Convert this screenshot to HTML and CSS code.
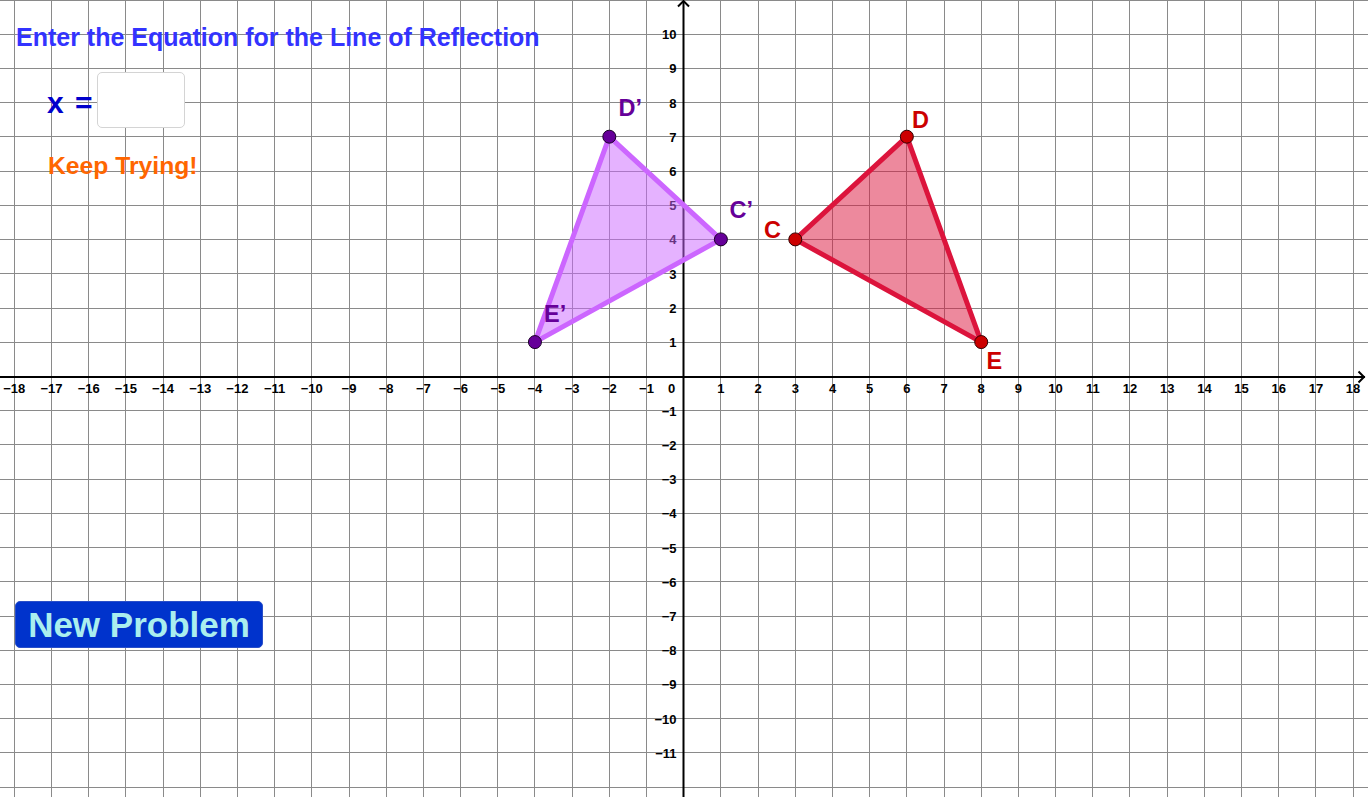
FILE: index.html
```html
<!DOCTYPE html>
<html lang="en">
<head>
<meta charset="utf-8">
<title>Line of Reflection</title>
<link rel="stylesheet" href="styles.css">
</head>
<body>
<div class="applet">
  <svg class="canvas" width="1368" height="797" viewBox="0 0 1368 797" xmlns="http://www.w3.org/2000/svg">
    <path class="grid" d="M14.5 0V797M51.5 0V797M88.5 0V797M125.5 0V797M163.5 0V797M200.5 0V797M237.5 0V797M274.5 0V797M311.5 0V797M349.5 0V797M386.5 0V797M423.5 0V797M460.5 0V797M497.5 0V797M534.5 0V797M572.5 0V797M609.5 0V797M646.5 0V797M720.5 0V797M758.5 0V797M795.5 0V797M832.5 0V797M869.5 0V797M906.5 0V797M944.5 0V797M981.5 0V797M1018.5 0V797M1055.5 0V797M1092.5 0V797M1129.5 0V797M1167.5 0V797M1204.5 0V797M1241.5 0V797M1278.5 0V797M1315.5 0V797M1353.5 0V797M0 0.5H1368M0 34.5H1368M0 68.5H1368M0 102.5H1368M0 136.5H1368M0 171.5H1368M0 205.5H1368M0 239.5H1368M0 273.5H1368M0 308.5H1368M0 342.5H1368M0 410.5H1368M0 444.5H1368M0 479.5H1368M0 513.5H1368M0 547.5H1368M0 581.5H1368M0 616.5H1368M0 650.5H1368M0 684.5H1368M0 718.5H1368M0 752.5H1368M0 787.5H1368"/>
    <path class="axis" d="M0 377H1365M683.5 797V1"/>
    <path class="axis" d="M1358.5 371.5L1364 377L1358.5 382.5M678 6.5L683.5 1L689 6.5"/>
    <g class="xlab">
      <text x="14.3" y="393.3">−18</text><text x="51.5" y="393.3">−17</text><text x="88.7" y="393.3">−16</text><text x="125.9" y="393.3">−15</text><text x="163" y="393.3">−14</text><text x="200.2" y="393.3">−13</text><text x="237.4" y="393.3">−12</text><text x="274.6" y="393.3">−11</text><text x="311.8" y="393.3">−10</text><text x="349" y="393.3">−9</text><text x="386.2" y="393.3">−8</text><text x="423.4" y="393.3">−7</text><text x="460.6" y="393.3">−6</text><text x="497.8" y="393.3">−5</text><text x="534.9" y="393.3">−4</text><text x="572.1" y="393.3">−3</text><text x="609.3" y="393.3">−2</text><text x="646.5" y="393.3">−1</text><text x="671.5" y="393.3">0</text><text x="720.9" y="393.3">1</text><text x="758.1" y="393.3">2</text><text x="795.3" y="393.3">3</text><text x="832.5" y="393.3">4</text><text x="869.7" y="393.3">5</text><text x="906.8" y="393.3">6</text><text x="944" y="393.3">7</text><text x="981.2" y="393.3">8</text><text x="1018.4" y="393.3">9</text><text x="1055.6" y="393.3">10</text><text x="1092.8" y="393.3">11</text><text x="1130" y="393.3">12</text><text x="1167.2" y="393.3">13</text><text x="1204.4" y="393.3">14</text><text x="1241.6" y="393.3">15</text><text x="1278.7" y="393.3">16</text><text x="1315.9" y="393.3">17</text><text x="1353.1" y="393.3">18</text>
    </g>
    <g class="ylab">
      <text x="676.5" y="39">10</text><text x="676.5" y="73.2">9</text><text x="676.5" y="107.5">8</text><text x="676.5" y="141.7">7</text><text x="676.5" y="175.9">6</text><text x="676.5" y="210.2">5</text><text x="676.5" y="244.4">4</text><text x="676.5" y="278.6">3</text><text x="676.5" y="312.8">2</text><text x="676.5" y="347.1">1</text><text x="676.5" y="415.5">−1</text><text x="676.5" y="449.8">−2</text><text x="676.5" y="484">−3</text><text x="676.5" y="518.2">−4</text><text x="676.5" y="552.5">−5</text><text x="676.5" y="586.7">−6</text><text x="676.5" y="620.9">−7</text><text x="676.5" y="655.1">−8</text><text x="676.5" y="689.4">−9</text><text x="676.5" y="723.6">−10</text><text x="676.5" y="757.8">−11</text>
    </g>
    <polygon class="tri-image" points="609.32,136.69 720.89,239.38 534.94,342.07"/>
    <polygon class="tri-pre" points="795.27,239.38 906.84,136.69 981.22,342.07"/>
    <circle class="pt-image" cx="609.32" cy="136.69" r="6.5"/>
    <circle class="pt-image" cx="720.89" cy="239.38" r="6.5"/>
    <circle class="pt-image" cx="534.94" cy="342.07" r="6.5"/>
    <circle class="pt-pre" cx="795.27" cy="239.38" r="6.5"/>
    <circle class="pt-pre" cx="906.84" cy="136.69" r="6.5"/>
    <circle class="pt-pre" cx="981.22" cy="342.07" r="6.5"/>
    <text class="lab-image" x="618.5" y="116">D’</text>
    <text class="lab-image" x="729.5" y="218.3">C’</text>
    <text class="lab-image" x="544" y="321.7">E’</text>
    <text class="lab-pre" x="764" y="237.5">C</text>
    <text class="lab-pre" x="912" y="128.3">D</text>
    <text class="lab-pre" x="986.5" y="368.5">E</text>
  </svg>

  <div class="panel">
    <h1 class="prompt">Enter the Equation for the Line of Reflection</h1>
    <div class="eq-row">
      <span class="eq-label">x =</span>
      <input class="eq-input" type="text" aria-label="x value">
    </div>
    <p class="status">Keep Trying!</p>
  </div>

  <button class="new-btn" type="button">New Problem</button>
</div>
</body>
</html>
```

FILE: styles.css
```css
html, body {
  margin: 0;
  padding: 0;
  background: #ffffff;
  overflow: hidden;
}

.applet {
  position: relative;
  width: 1368px;
  height: 797px;
  font-family: "Liberation Sans", Arial, sans-serif;
}

.canvas {
  display: block;
}

.grid {
  fill: none;
  stroke: #8a8a8a;
  stroke-width: 1;
}

.axis {
  fill: none;
  stroke: #000000;
  stroke-width: 2;
}

.xlab text,
.ylab text {
  font-family: "Liberation Sans", Arial, sans-serif;
  font-weight: bold;
  font-size: 13px;
  fill: #000000;
}

.xlab text {
  text-anchor: middle;
}

.ylab text {
  text-anchor: end;
}

.tri-image {
  fill: rgba(204, 102, 255, 0.5);
  stroke: #cc66ff;
  stroke-width: 5;
  stroke-linejoin: round;
}

.tri-pre {
  fill: rgba(220, 20, 60, 0.5);
  stroke: #dc143c;
  stroke-width: 5;
  stroke-linejoin: round;
}

.pt-image {
  fill: #660099;
  stroke: #1a0026;
  stroke-width: 1;
}

.pt-pre {
  fill: #cc0000;
  stroke: #330000;
  stroke-width: 1;
}

.lab-image,
.lab-pre {
  font-family: "Liberation Sans", Arial, sans-serif;
  font-weight: bold;
  font-size: 23.5px;
}

.lab-image {
  fill: #660099;
}

.lab-pre {
  fill: #cc0000;
}

.panel {
  position: absolute;
  left: 0;
  top: 0;
  padding: 23px 0 0 16px;
  display: flex;
  flex-direction: column;
  align-items: flex-start;
}

.prompt {
  margin: 0;
  font-size: 25px;
  line-height: 28px;
  font-weight: bold;
  color: #3333ff;
  white-space: nowrap;
}

.eq-row {
  margin: 21px 0 0 31px;
  display: flex;
  align-items: center;
  gap: 4px;
}

.eq-label {
  font-size: 30px;
  font-weight: bold;
  line-height: 34px;
  word-spacing: 3px;
  color: #0000cc;
  padding-top: 6px;
}

.eq-input {
  box-sizing: border-box;
  width: 88px;
  height: 56px;
  margin: 0;
  padding: 0 6px;
  border: 1px solid #d4d4d4;
  border-radius: 5px;
  background: #ffffff;
  font-family: "Liberation Sans", Arial, sans-serif;
  font-size: 22px;
  outline: none;
}

.status {
  margin: 24px 0 0 32px;
  font-size: 24.7px;
  line-height: 28px;
  font-weight: bold;
  color: #ff6600;
}

.new-btn {
  position: absolute;
  left: 15px;
  top: 601px;
  box-sizing: border-box;
  width: 248px;
  height: 47px;
  margin: 0;
  padding: 0;
  border: 1px solid #2a4fc8;
  border-radius: 5px;
  background: #0033cc;
  color: #aaeeee;
  font-family: "Liberation Sans", Arial, sans-serif;
  font-size: 35px;
  font-weight: bold;
  line-height: 45px;
  text-align: center;
}
```
